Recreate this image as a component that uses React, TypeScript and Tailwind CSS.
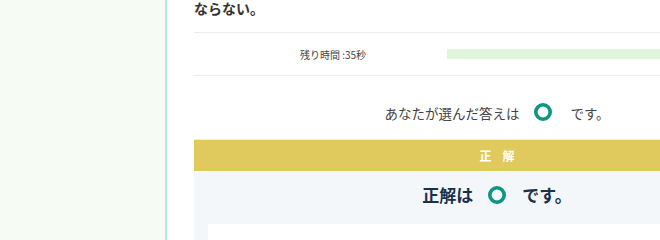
import React from "react";

function Ring({ size, stroke }: { size: number; stroke: number }) {
  const r = (size - stroke) / 2;
  return (
    <svg width={size} height={size} viewBox={`0 0 ${size} ${size}`} className="inline-block">
      <circle cx={size / 2} cy={size / 2} r={r} fill="none" stroke="#0b9582" strokeWidth={stroke} />
    </svg>
  );
}

export default function App() {
  return (
    <div
      className="flex w-[660px] h-[240px] overflow-hidden bg-white"
      style={{ fontFamily: '"Noto Sans CJK JP", "Noto Sans", sans-serif' }}
    >
      <div className="w-[167px] shrink-0 bg-[#f6fcf4] border-r-2 border-[#b4e6e6]" />
      <div className="flex-1 pl-[27px]">
        <div className="w-[606px]">
          <div className="h-[33px] border-b border-[#ececec] flex items-start">
            <div className="text-[14px] leading-[18px] font-bold text-[#333] -mt-[1px]">ならない。</div>
          </div>
          <div className="h-[43px] border-b border-[#ececec] flex items-center">
            <div className="w-[253px] text-center text-[10px] text-[#444] pl-[25px]">残り時間 :35秒</div>
            <div className="flex-1 h-[10px] bg-[#dff5dc]" />
          </div>
          <div className="h-[63px] flex items-center justify-center text-[13.5px] text-[#444] pt-[12px]">
            <span>あなたが選んだ答えは</span>
            <span className="ml-[15px] mr-[18px] flex items-center -mt-[3px]"><Ring size={18} stroke={3.6} /></span>
            <span>です。</span>
          </div>
          <div className="h-[32px] bg-[#e0ca5e] flex items-center justify-center text-white text-[12px] font-bold border-t border-[#f0eede]">
            正&nbsp;&nbsp;&nbsp;&nbsp;解
          </div>
          <div className="bg-[#f4f7f9] pt-[11px] px-[14px]">
            <div className="h-[42px] flex items-start justify-center text-[17px] font-bold text-[#17324a]">
              <span>正解は</span>
              <span className="ml-[15px] mr-[16px] mt-[4px] flex items-center"><Ring size={18} stroke={3.6} /></span>
              <span>です。</span>
            </div>
            <div className="bg-white h-[40px]" />
          </div>
        </div>
      </div>
    </div>
  );
}
